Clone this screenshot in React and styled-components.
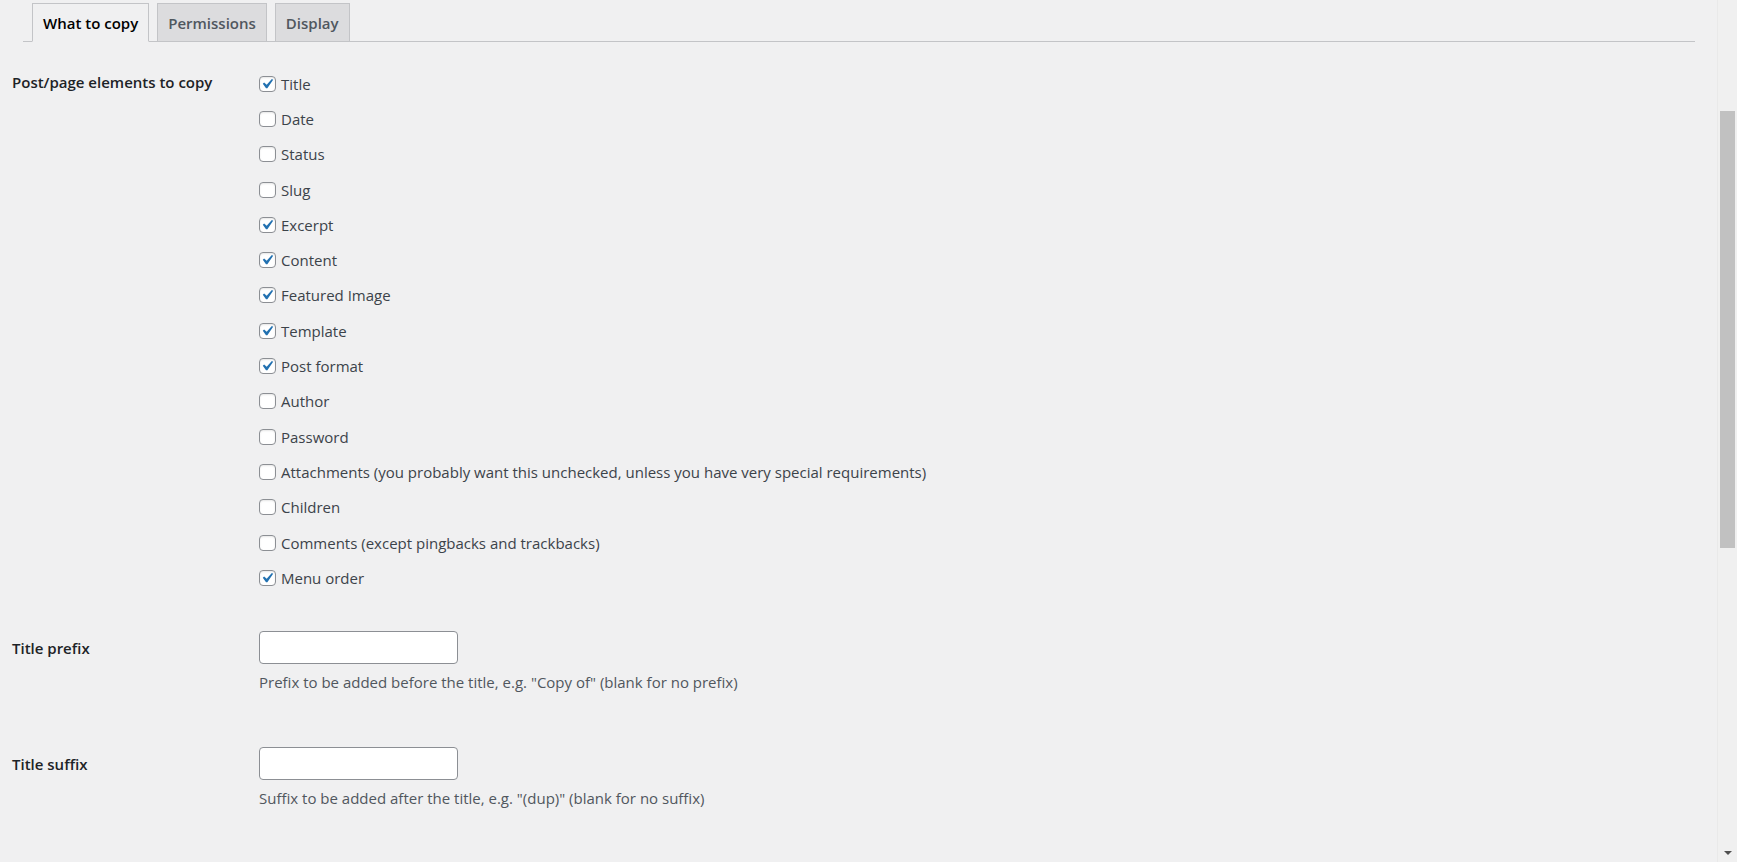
import React from "react";
import styled, { createGlobalStyle } from "styled-components";

const GlobalStyle = createGlobalStyle`
  html, body {
    margin: 0;
    padding: 0;
    background: #f0f0f1;
    overflow: hidden;
  }
  body {
    font-family: "Open Sans", "Noto Sans", "Liberation Sans", sans-serif;
    font-size: 15px;
    color: #3c434a;
  }
`;

const Screen = styled.div`
  display: flex;
  height: 862px;
  width: 100%;
  overflow: hidden;
  background: #f0f0f1;
`;

const Main = styled.main`
  flex: 1;
  min-width: 0;
  display: flex;
  flex-direction: column;
`;

const TabBar = styled.nav`
  display: flex;
  gap: 8px;
  margin: 3px 22px 0 23px;
  padding-left: 9px;
  border-bottom: 1px solid #c3c4c7;
  height: 38px;
`;

const Tab = styled.a`
  box-sizing: border-box;
  display: flex;
  align-items: center;
  height: ${(p) => (p.$active ? "39px" : "38px")};
  margin-bottom: ${(p) => (p.$active ? "-1px" : "0")};
  padding: 0 ${(p) => p.$pad}px;
  border: 1px solid #c3c4c7;
  border-bottom: ${(p) => (p.$active ? "1px solid #f0f0f1" : "none")};
  background: ${(p) => (p.$active ? "#f0f0f1" : "#dcdcde")};
  color: ${(p) => (p.$active ? "#000" : "#50575e")};
  font-weight: 600;
  font-size: 15px;
  text-decoration: none;
  white-space: nowrap;
`;

const FormRow = styled.section`
  display: grid;
  grid-template-columns: 247px 1fr;
  padding-left: 12px;
  margin-top: ${(p) => p.$top}px;
`;

const RowLabel = styled.label`
  font-weight: 600;
  color: #1d2327;
  font-size: 15px;
  line-height: 18px;
  margin-top: ${(p) => p.$offset}px;
`;

const CheckList = styled.div`
  display: flex;
  flex-direction: column;
`;

const CheckRow = styled.label`
  display: flex;
  align-items: center;
  height: 35.3px;
  gap: 5px;
  color: #3c434a;
  font-size: 15px;
  white-space: nowrap;
`;

const Box = styled.span`
  box-sizing: border-box;
  width: 17px;
  height: 16px;
  flex: none;
  border: 1px solid #8c8f94;
  border-radius: 4px;
  background: #fff;
  display: flex;
  align-items: center;
  justify-content: center;
  box-shadow: inset 0 1px 2px rgba(0, 0, 0, 0.1);
`;

const CheckMark = styled.svg`
  flex: none;
  width: 20px;
  height: 20px;
  margin: 0 1px 0 0;
`;

const FieldCol = styled.div`
  display: flex;
  flex-direction: column;
  align-items: flex-start;
`;

const TextInput = styled.input`
  box-sizing: border-box;
  width: 199px;
  height: 33px;
  border: 1px solid #8c8f94;
  border-radius: 4px;
  background: #fff;
  padding: 0 8px;
  font-family: inherit;
  font-size: 15px;
  margin: 0;
`;

const Help = styled.p`
  margin: 8px 0 0;
  font-size: 15px;
  line-height: 20px;
  color: #50575e;
`;

const ScrollTrack = styled.div`
  width: 19px;
  flex: none;
  display: flex;
  flex-direction: column;
  align-items: center;
  border-left: 1px solid #e9e9e9;
  background: #f0f0f0;
`;

const Thumb = styled.div`
  width: 15px;
  height: 437px;
  margin-top: 111px;
  background: #c1c1c1;
`;

const ArrowDown = styled.div`
  margin-top: auto;
  margin-bottom: 7px;
  width: 0;
  height: 0;
  border-left: 4px solid transparent;
  border-right: 4px solid transparent;
  border-top: 4px solid #505050;
`;

const Check = ({ checked }) => (
  <Box>
    {checked && (
      <CheckMark viewBox="0 0 20 20">
        <path
          d="M14.83 4.89l1.34.94-5.81 8.38H9.02L5.78 9.67l1.34-1.25 2.57 2.4z"
          fill="#2271b1"
        />
      </CheckMark>
    )}
  </Box>
);

const items = [
  ["Title", true],
  ["Date", false],
  ["Status", false],
  ["Slug", false],
  ["Excerpt", true],
  ["Content", true],
  ["Featured Image", true],
  ["Template", true],
  ["Post format", true],
  ["Author", false],
  ["Password", false],
  ["Attachments (you probably want this unchecked, unless you have very special requirements)", false],
  ["Children", false],
  ["Comments (except pingbacks and trackbacks)", false],
  ["Menu order", true],
];

export default function App() {
  return (
    <>
      <GlobalStyle />
      <Screen>
        <Main>
          <TabBar>
            <Tab $active $pad={10}>What to copy</Tab>
            <Tab $pad={10}>Permissions</Tab>
            <Tab $pad={10}>Display</Tab>
          </TabBar>

          <FormRow $top={24}>
            <RowLabel $offset={7}>Post/page elements to copy</RowLabel>
            <CheckList>
              {items.map(([label, checked]) => (
                <CheckRow key={label}>
                  <Check checked={checked} />
                  {label}
                </CheckRow>
              ))}
            </CheckList>
          </FormRow>

          <FormRow $top={36}>
            <RowLabel $offset={8}>Title prefix</RowLabel>
            <FieldCol>
              <TextInput type="text" />
              <Help>Prefix to be added before the title, e.g. "Copy of" (blank for no prefix)</Help>
            </FieldCol>
          </FormRow>

          <FormRow $top={55}>
            <RowLabel $offset={8}>Title suffix</RowLabel>
            <FieldCol>
              <TextInput type="text" />
              <Help>Suffix to be added after the title, e.g. "(dup)" (blank for no suffix)</Help>
            </FieldCol>
          </FormRow>
        </Main>
        <ScrollTrack>
          <Thumb />
          <ArrowDown />
        </ScrollTrack>
      </Screen>
    </>
  );
}
